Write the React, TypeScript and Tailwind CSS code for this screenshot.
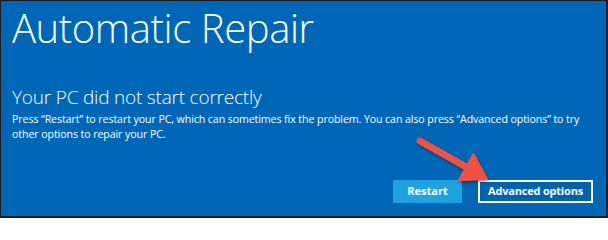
import React from "react";

const Arrow = () => (
  <svg
    className="absolute left-0 top-0 pointer-events-none"
    width="608"
    height="218"
    viewBox="0 0 608 218"
    style={{ filter: "drop-shadow(1px 2px 1.5px rgba(0,0,0,0.35))" }}
  >
    <line x1="420" y1="141" x2="468" y2="168" stroke="#ef5240" strokeWidth="7" strokeLinecap="round" />
    <polygon points="487,179 458.7,180.3 473.5,154.1" fill="#ef5240" stroke="#ef5240" strokeWidth="2" strokeLinejoin="round" />
  </svg>
);

export default function App() {
  return (
    <div className="relative w-[608px] h-[218px] bg-[#1c1c1c] pt-px pl-px pr-[2px] pb-[2px]">
      <div
        className="flex flex-col h-full bg-[#0067b8] text-white pl-[11px] pr-[11px]"
        style={{ fontFamily: '"Open Sans", "Noto Sans", sans-serif' }}
      >
        <h1 className="mt-[1px] text-[40px] leading-[52px] font-light tracking-[-0.4px]">Automatic Repair</h1>
        <h2 className="mt-[31px] text-[19px] leading-[24px] font-light tracking-[-0.2px]">Your PC did not start correctly</h2>
        <p className="mt-[3px] text-[10.6px] leading-[15px] tracking-[-0.08px] whitespace-nowrap">
          Press “Restart” to restart your PC, which can sometimes fix the problem. You can also press “Advanced options” to try
          <br />
          other options to repair your PC.
        </p>
        <div className="mt-auto mb-[13px] flex justify-end gap-[16px] pr-[2px]">
          <button className="w-[69px] h-[23px] bg-[#1fa3e0] text-[11px] font-bold text-white">Restart</button>
          <button className="w-[115px] h-[23px] border-2 border-white bg-[#0063b1] text-[11px] font-bold text-white tracking-[-0.2px]">
            Advanced options
          </button>
        </div>
      </div>
      <Arrow />
    </div>
  );
}
